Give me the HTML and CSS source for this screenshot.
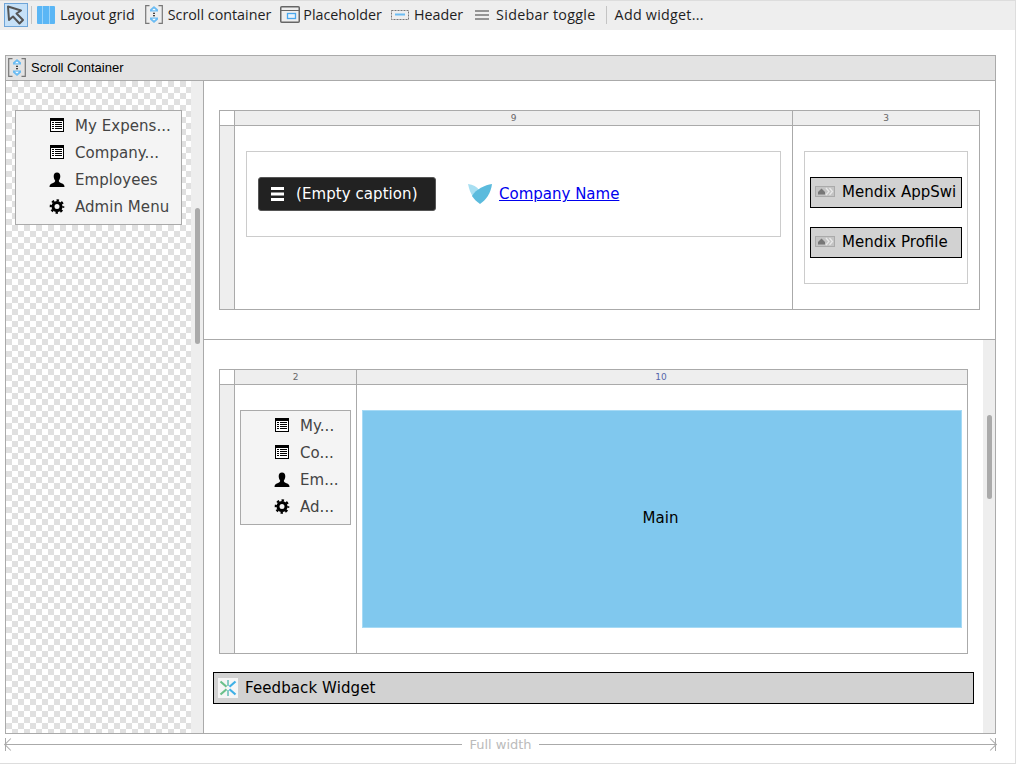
FILE: index.html
```html
<!DOCTYPE html>
<html lang="en">
<head>
<meta charset="utf-8">
<title>Page editor</title>
<link rel="stylesheet" href="styles.css">
</head>
<body>
<div class="toolbar">
  <span class="tool tool-active"><svg width="20" height="20" viewBox="0 0 20 20"><path d="M2 1.500 L3 15 L7 11.500 L13.500 18.500 L17 15 L10.500 8.500 L15 5.500 Z" fill="none" stroke="#555" stroke-width="2" stroke-linejoin="round"/></svg></span>
  <span class="sep"></span>
  <span class="tool t-grid"><svg width="18" height="18" viewBox="0 0 18 18"><rect width="18" height="18" rx="1" fill="#5ab6f5"/><path d="M5.500 0V18M12.500 0V18" stroke="#9ad4fa"/></svg>Layout grid</span>
  <span class="tool t-scroll"><svg width="18" height="19" viewBox="0 0 18 19"><use href="#i-scroll"/></svg>Scroll container</span>
  <span class="tool t-holder"><svg width="20" height="17" viewBox="0 0 20 17"><rect x=".75" y=".75" width="18.500" height="15.500" rx="1" fill="none" stroke="#666" stroke-width="1.500"/><path d="M1 4.500H19" stroke="#666"/><rect x="7.500" y="7.500" width="8" height="5" fill="#e6f3fd" stroke="#4aa8ee" stroke-width="1.300"/></svg>Placeholder</span>
  <span class="tool t-header"><svg width="18" height="10" viewBox="0 0 18 10"><rect x=".5" y=".5" width="17" height="9" fill="none" stroke="#777" stroke-dasharray="2 1"/><path d="M4 4.500H14" stroke="#6bbcf3" stroke-width="2"/></svg>Header</span>
  <span class="tool t-toggle"><svg width="14" height="10" viewBox="0 0 14 10"><path d="M0 1H14M0 5H14M0 9H14" stroke="#777" stroke-width="1.500"/></svg>Sidebar toggle</span>
  <span class="sep sep-late"></span>
  <span class="tool t-add">Add widget...</span>
</div>
<main class="canvas">
  <section class="frame">
    <header class="frame-head"><svg width="18" height="19" viewBox="0 0 18 19"><use href="#i-scroll"/></svg>Scroll Container</header>
    <div class="frame-body">
      <aside class="sidebar">
        <div class="checker">
          <nav class="menu menu-side">
            <div class="menu-row"><svg class="ic"><use href="#i-list"/></svg><span class="menu-text">My Expens...</span></div>
            <div class="menu-row"><svg class="ic"><use href="#i-list"/></svg><span class="menu-text">Company...</span></div>
            <div class="menu-row"><svg class="ic"><use href="#i-user"/></svg><span class="menu-text">Employees</span></div>
            <div class="menu-row"><svg class="ic"><use href="#i-gear"/></svg><span class="menu-text">Admin Menu</span></div>
          </nav>
        </div>
        <div class="track track-side"><span class="thumb thumb-side"></span></div>
      </aside>
      <div class="content">
        <div class="top-region">
          <div class="grid grid-top">
            <div class="corner"></div><div class="col-head">9</div><div class="col-head">3</div>
            <div class="gutter"></div>
            <div class="cell">
              <div class="holder holder-left">
                <button class="dark-btn"><svg width="13" height="14" viewBox="0 0 13 14"><path d="M0 0h13v3H0zM0 5.500h13v3H0zM0 11h13v3H0z" fill="#fff"/></svg>(Empty caption)</button>
                <span class="brand"><svg width="24" height="20" viewBox="0 0 24 20"><path d="M0 0 C5 .5 9 2.500 11 6 L5 13 C2.500 9 1 5 0 0Z" fill="#a8dff2"/><path d="M24 0 C17 1 8 5 4 12 C6 15 9 18 12 20 C18 16 23 9 24 0Z" fill="#5bbbdd"/></svg><a href="#" class="brand-link">Company Name</a></span>
              </div>
            </div>
            <div class="cell cell-right">
              <div class="holder holder-right">
                <div class="widget widget-small"><svg class="w-ic" width="20" height="11" viewBox="0 0 20 11"><use href="#i-switch"/></svg><span class="clip">Mendix AppSwi</span></div>
                <div class="widget widget-small"><svg class="w-ic" width="20" height="11" viewBox="0 0 20 11"><use href="#i-switch"/></svg><span class="clip">Mendix Profile</span></div>
              </div>
            </div>
          </div>
        </div>
        <div class="bottom-region">
          <div class="bottom-inner">
            <div class="grid grid-bottom">
              <div class="corner"></div><div class="col-head">2</div><div class="col-head col-blue">10</div>
              <div class="gutter"></div>
              <div class="cell cell-menu">
                <nav class="menu menu-narrow">
                  <div class="menu-row"><svg class="ic"><use href="#i-list"/></svg><span class="menu-text">My...</span></div>
                  <div class="menu-row"><svg class="ic"><use href="#i-list"/></svg><span class="menu-text">Co...</span></div>
                  <div class="menu-row"><svg class="ic"><use href="#i-user"/></svg><span class="menu-text">Em...</span></div>
                  <div class="menu-row"><svg class="ic"><use href="#i-gear"/></svg><span class="menu-text">Ad...</span></div>
                </nav>
              </div>
              <div class="cell cell-main"><div class="main-box">Main</div></div>
            </div>
            <div class="widget widget-wide"><svg width="20" height="20" viewBox="0 0 20 20"><rect width="20" height="20" fill="#f6f6f6"/><path d="M10 2V8M10 12V18" stroke="#7cc7c0" stroke-width="1.800"/><path d="M2.500 3.500L8.500 8.800M2.500 16.500L8.500 11.200" stroke="#6cc08b" stroke-width="2.200"/><path d="M17.500 3.500L11.500 8.800M17.500 16.500L11.500 11.200" stroke="#3fb0e6" stroke-width="2.200"/></svg>Feedback Widget</div>
          </div>
          <div class="track track-main"><span class="thumb thumb-main"></span></div>
        </div>
      </div>
    </div>
  </section>
  <div class="ruler">
    <span class="ruler-line ruler-start"></span>
    <span class="ruler-label">Full width</span>
    <span class="ruler-line ruler-end"></span>
  </div>
</main>
<svg class="defs" width="0" height="0" aria-hidden="true">
  <defs>
    <symbol id="i-scroll" viewBox="0 0 18 19"><path d="M4.500 .6H.7V18.400H4.500M13.500 .6H17.300V18.400H13.500" fill="none" stroke="#777" stroke-width="1.200"/><path d="M5 6.500 V4.500 L9 1 L13 4.500 V6.500Z M5 12.500 V14.500 L9 18 L13 14.500 V12.500Z" fill="#6bbcf3"/><path d="M7 5.200 L9 3.400 L11 5.200Z M7 13.800 L9 15.600 L11 13.800Z" fill="#fff"/><rect x="8" y="7.700" width="2" height="1.300" fill="#444"/><rect x="8" y="10" width="2" height="1.300" fill="#444"/></symbol>
    <symbol id="i-list" viewBox="0 0 16 16"><rect x="1" y="0" width="14" height="14" fill="#000"/><rect x="2" y="3" width="12" height="10" fill="#fff"/><path d="M3 4h2v1H3zM6 4h7v1H6zM3 6h2v1H3zM6 6h7v1H6zM3 8h2v1H3zM6 8h7v1H6zM3 10h2v1H3zM6 10h7v1H6z" fill="#000"/></symbol>
    <symbol id="i-user" viewBox="0 0 16 16"><path d="M8 0.500C10.200 0.500 11.300 2.200 11.300 4.300C11.300 6.300 10.300 8 9.800 8.800C9.800 10 11 10.700 12.500 11.200C14.300 11.800 15.500 12.800 15.500 15H.5C.5 12.800 1.700 11.800 3.500 11.200C5 10.700 6.200 10 6.200 8.800C5.700 8 4.700 6.300 4.700 4.300C4.700 2.200 5.800 .5 8 .5Z" fill="#000"/></symbol>
    <symbol id="i-gear" viewBox="0 0 16 16"><circle cx="8" cy="7.500" r="4" fill="none" stroke="#000" stroke-width="3"/><circle cx="8" cy="7.500" r="6.200" fill="none" stroke="#000" stroke-width="2.200" stroke-dasharray="2.430 2.440" stroke-dashoffset="1.200"/></symbol>
    <symbol id="i-switch" viewBox="0 0 20 11"><rect x=".5" y=".5" width="19" height="10" fill="#c4c4c4" stroke="#aaa"/><path d="M3 6L6.500 2.500L10 6V8.500H3Z" fill="#777"/><path d="M11 2L14 5.500L11 9M14.500 2L17.500 5.500L14.500 9" fill="none" stroke="#e8e8e8" stroke-width="1.300"/></symbol>
  </defs>
</svg>
</body>
</html>
```
FILE: styles.css
```css
* { box-sizing: border-box; }
html, body { margin: 0; padding: 0; }
body {
  width: 1016px;
  height: 764px;
  background: #fff;
  overflow: hidden;
  font-family: "DejaVu Sans", sans-serif;
  color: #000;
  border-right: 1px solid #ddd;
  border-bottom: 1px solid #ddd;
}
.toolbar {
  height: 30px;
  background: #eee;
  border-top: 1px solid #ddd;
  display: flex;
  align-items: center;
  padding: 0 0 2px 4px;
  font-family: "Open Sans", sans-serif;
  font-size: 14.3px;
  color: #1e1e1e;
  white-space: nowrap;
}
.tool { display: inline-flex; align-items: center; gap: 5px; }
.tool-active {
  width: 24px;
  height: 24px;
  justify-content: center;
  background: #c6e1f8;
  border: 1px solid #6fa5d8;
}
.sep { width: 1px; height: 18px; background: #c4c4c4; margin: 0 5px 0 3px; }
.sep-late { margin: 0 8px 0 10px; }
.t-grid { margin-right: 10px; }
.t-scroll { margin-right: 9px; }
.t-holder { margin-right: 9px; gap: 3px; }
.t-header { margin-right: 12px; }
.t-toggle { gap: 7px; letter-spacing: .3px; }
.t-add { letter-spacing: .25px; }
.canvas { padding: 25px 0 0 5px; }
.frame { width: 991px; height: 679px; border: 1px solid #aaa; display: flex; flex-direction: column; }
.frame-head {
  height: 25px;
  flex: none;
  background: #e3e3e3;
  border-bottom: 1px solid #aaa;
  display: flex;
  align-items: center;
  gap: 5px;
  padding: 0 0 1px 2px;
  font-family: "Liberation Sans", sans-serif;
  font-size: 13px;
}
.frame-body { flex: 1; display: flex; min-height: 0; }
.sidebar { width: 198px; flex: none; display: flex; border-right: 1px solid #aaa; }
.checker {
  flex: 1;
  padding: 29px 9px 0 9px;
  background-color: #fff;
  background-image: conic-gradient(#e0e0e0 25%, #fff 0 50%, #e0e0e0 0 75%, #fff 0);
  background-size: 12px 12px;
}
.track { width: 12px; flex: none; background: #eee; position: relative; }
.thumb { position: absolute; left: 4px; width: 5px; background: #aaa; border-radius: 3px; }
.thumb-side { top: 127px; height: 136px; }
.thumb-main { top: 75px; height: 84px; }
.menu {
  background: #f4f4f4;
  border: 1px solid #aaa;
  padding: 1px 0;
  color: #444;
  font-size: 15px;
  letter-spacing: .05px;
}
.menu-side { height: 115px; width: 167px; }
.menu-row { height: 27px; display: flex; align-items: center; white-space: nowrap; }
.menu-side .menu-row { padding-left: 33px; }
.menu-narrow { width: 111px; height: 115px; }
.menu-narrow .menu-row { padding-left: 33px; }
.ic { width: 16px; height: 16px; margin-right: 10px; flex: none; }
.content { flex: 1; min-width: 0; display: flex; flex-direction: column; }
.top-region { height: 259px; flex: none; border-bottom: 1px solid #aaa; padding: 29px 0 0 15px; }
.bottom-region { flex: 1; display: flex; min-height: 0; }
.bottom-inner { flex: 1; padding: 29px 9px 0 9px; }
.grid { display: grid; border: 1px solid #aaa; }
.grid-top { width: 761px; height: 200px; grid-template-columns: 15px 558px 1fr; grid-template-rows: 15px 1fr; }
.grid-bottom { width: 749px; height: 285px; margin-left: 6px; grid-template-columns: 15px 122px 1fr; grid-template-rows: 15px 1fr; }
.corner { border-right: 1px solid #aaa; border-bottom: 1px solid #aaa; }
.col-head {
  background: #eee;
  border-bottom: 1px solid #aaa;
  border-right: 1px solid #aaa;
  text-align: center;
  font-size: 9px;
  line-height: 14px;
  color: #666;
}
.col-head:nth-child(3) { border-right: 0; }
.col-blue { color: #5566aa; padding-right: 2px; }
.gutter { background: #eee; border-right: 1px solid #aaa; }
.cell { border-right: 1px solid #aaa; min-width: 0; }
.cell:last-child { border-right: 0; }
.holder { border: 1px solid #ccc; }
.holder-left {
  margin: 25px 11px 0 11px;
  height: 86px;
  display: flex;
  align-items: center;
  padding-left: 11px;
}
.holder-right {
  margin: 25px 11px 0 11px;
  height: 133px;
  padding: 25px 5px 0 5px;
  display: flex;
  flex-direction: column;
  gap: 19px;
}
.dark-btn {
  width: 178px;
  height: 34px;
  background: #222;
  border: 1px solid #555;
  border-radius: 3px;
  color: #fff;
  font: 15px "DejaVu Sans", sans-serif;
  letter-spacing: .07px;
  display: flex;
  align-items: center;
  gap: 12px;
  padding: 0 0 0 12px;
}
.brand { display: flex; align-items: center; gap: 7px; margin-left: 32px; font-size: 15px; }
.brand-link { color: #00e; text-decoration: underline; }
.widget {
  height: 31px;
  background: #d2d2d2;
  border: 1px solid #000;
  display: flex;
  align-items: center;
  font-size: 15px;
  white-space: nowrap;
  overflow: hidden;
}
.widget-small { padding: 0 0 2px 4px; gap: 7px; }
.w-ic { flex: none; }
.clip { overflow: hidden; }
.widget-wide { width: 761px; height: 32px; margin-top: 18px; padding-left: 4px; gap: 7px; letter-spacing: .1px; }
.cell-menu { padding: 25px 5px 0 5px; }
.cell-main { padding: 25px 5px 0 5px; }
.main-box {
  height: 218px;
  background: #80c8ee;
  border: 1px solid #a6daf5;
  display: flex;
  align-items: center;
  justify-content: center;
  padding: 0 3px 2px 0;
  font-size: 15px;
}
.ruler { width: 991px; height: 20px; display: flex; align-items: center; gap: 7px; font-size: 13px; color: #bbb; }
.ruler-line { flex: 1; height: 1px; background: #aaa; position: relative; }
.ruler-start::before, .ruler-end::before {
  content: "";
  position: absolute;
  top: -4px;
  width: 8px;
  height: 8px;
  border-left: 1px solid #aaa;
  border-bottom: 1px solid #aaa;
}
.ruler-start::before { left: 1px; transform: rotate(45deg); }
.ruler-end::before { right: 1px; transform: rotate(225deg); }
.ruler-start::after, .ruler-end::after {
  content: "";
  position: absolute;
  top: -6px;
  width: 1px;
  height: 13px;
  background: #aaa;
}
.ruler-start::after { left: 0; }
.ruler-end::after { right: 0; }
.defs { position: absolute; }
```
